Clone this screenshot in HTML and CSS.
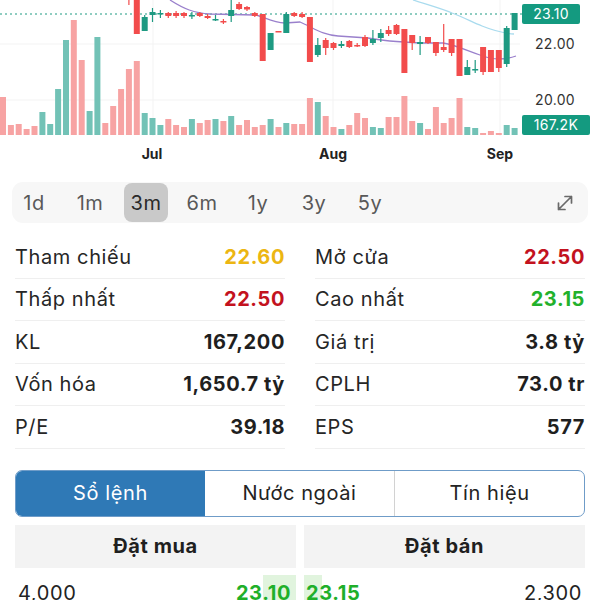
FILE: index.html
```html
<!DOCTYPE html>
<html lang="vi">
<head>
<meta charset="utf-8">
<title>Chart</title>
<link rel="stylesheet" href="styles.css">
</head>
<body>
<div class="chart">
<svg width="600" height="168" viewBox="0 0 600 168">
  <g class="grid">
    <line x1="153" y1="0" x2="153" y2="136"/>
    <line x1="333" y1="0" x2="333" y2="136"/>
    <line x1="500" y1="0" x2="500" y2="136"/>
    <line x1="0" y1="44" x2="520" y2="44"/>
    <line x1="0" y1="100" x2="520" y2="100"/>
  </g>
  <g class="vol-dn">
    <rect x="0" y="97" width="6" height="38"/>
    <rect x="7.9" y="125" width="6" height="10"/>
    <rect x="15.7" y="124" width="6" height="11"/>
    <rect x="23.6" y="129" width="6" height="6"/>
    <rect x="31.5" y="126" width="6" height="9"/>
    <rect x="70.8" y="20" width="6" height="115"/>
    <rect x="78.7" y="60" width="6" height="75"/>
    <rect x="102.3" y="123" width="6" height="12"/>
    <rect x="110.2" y="106" width="6" height="29"/>
    <rect x="118.1" y="89" width="6" height="46"/>
    <rect x="125.9" y="69" width="6" height="66"/>
    <rect x="133.8" y="61" width="6" height="74"/>
    <rect x="165.3" y="119" width="6" height="16"/>
    <rect x="173.1" y="125" width="6" height="10"/>
    <rect x="181.0" y="127" width="6" height="8"/>
    <rect x="196.8" y="123" width="6" height="12"/>
    <rect x="204.6" y="120" width="6" height="15"/>
    <rect x="220.4" y="121" width="6" height="14"/>
    <rect x="236.1" y="125" width="6" height="10"/>
    <rect x="244.0" y="120" width="6" height="15"/>
    <rect x="251.8" y="127" width="6" height="8"/>
    <rect x="259.7" y="125" width="6" height="10"/>
    <rect x="275.5" y="127" width="6" height="8"/>
    <rect x="291.2" y="124" width="6" height="11"/>
    <rect x="299.1" y="124" width="6" height="11"/>
    <rect x="306.9" y="98" width="6" height="37"/>
    <rect x="322.7" y="116" width="6" height="19"/>
    <rect x="330.5" y="127" width="6" height="8"/>
    <rect x="346.3" y="125" width="6" height="10"/>
    <rect x="354.2" y="113" width="6" height="22"/>
    <rect x="362.0" y="118" width="6" height="17"/>
    <rect x="385.6" y="117" width="6" height="18"/>
    <rect x="393.5" y="117" width="6" height="18"/>
    <rect x="401.4" y="96" width="6" height="39"/>
    <rect x="409.2" y="121" width="6" height="14"/>
    <rect x="425.0" y="129" width="6" height="6"/>
    <rect x="432.9" y="107" width="6" height="28"/>
    <rect x="440.7" y="123" width="6" height="12"/>
    <rect x="448.6" y="118" width="6" height="17"/>
    <rect x="456.5" y="98" width="6" height="37"/>
    <rect x="480.1" y="133" width="6" height="2"/>
    <rect x="487.9" y="131" width="6" height="4"/>
    <rect x="495.8" y="133" width="6" height="2"/>
  </g>
  <g class="vol-up">
    <rect x="39.4" y="112" width="6" height="23"/>
    <rect x="47.2" y="124" width="6" height="11"/>
    <rect x="55.1" y="89" width="6" height="46"/>
    <rect x="63.0" y="40" width="6" height="95"/>
    <rect x="86.6" y="111" width="6" height="24"/>
    <rect x="94.4" y="37" width="6" height="98"/>
    <rect x="141.7" y="113" width="6" height="22"/>
    <rect x="149.5" y="118" width="6" height="17"/>
    <rect x="157.4" y="125" width="6" height="10"/>
    <rect x="188.9" y="119" width="6" height="16"/>
    <rect x="212.5" y="119" width="6" height="16"/>
    <rect x="228.2" y="116" width="6" height="19"/>
    <rect x="267.6" y="119" width="6" height="16"/>
    <rect x="283.3" y="123" width="6" height="12"/>
    <rect x="314.8" y="102" width="6" height="33"/>
    <rect x="338.4" y="129" width="6" height="6"/>
    <rect x="369.9" y="127" width="6" height="8"/>
    <rect x="377.8" y="128" width="6" height="7"/>
    <rect x="417.1" y="123" width="6" height="12"/>
    <rect x="464.3" y="127" width="6" height="8"/>
    <rect x="472.2" y="128" width="6" height="7"/>
    <rect x="503.7" y="125" width="6" height="10"/>
    <rect x="511.6" y="128" width="6" height="7"/>
  </g>
  <line class="last" x1="0" y1="14" x2="522" y2="14"/>
  <path class="ma-long" d="M413,0 C425,4 440,8 452,13 C465,18 472,22 482,26 C492,30 500,33 514,34"/>
  <path class="ma-short" d="M170,0 C184,9 194,13 210,14 L255,15 C263,16 271,22 285,23 L300,22 C314,28 322,35 338,36 L368,38 C384,41 400,42 420,43 L443,43 C455,45 466,50 480,55 C490,59 502,61 516,56"/>
  <g class="dn">
    <line x1="128.9" y1="0" x2="128.9" y2="5"/>
    <rect x="133.8" y="0" width="6" height="34"/>
    <line x1="168.3" y1="12" x2="168.3" y2="18"/><rect x="165.3" y="13" width="6" height="3"/>
    <line x1="176.1" y1="11" x2="176.1" y2="18"/><rect x="173.1" y="13" width="6" height="3"/>
    <line x1="184.0" y1="12" x2="184.0" y2="18"/><rect x="181.0" y="13" width="6" height="3"/>
    <line x1="199.8" y1="12" x2="199.8" y2="17"/><rect x="196.8" y="13" width="6" height="3"/>
    <line x1="207.6" y1="14" x2="207.6" y2="19"/><rect x="204.6" y="16" width="6" height="2"/>
    <line x1="223.4" y1="19" x2="223.4" y2="24"/><rect x="220.4" y="21" width="6" height="1.5"/>
    <line x1="239.1" y1="2" x2="239.1" y2="10"/><rect x="236.1" y="4" width="6" height="5"/>
    <line x1="247.0" y1="6" x2="247.0" y2="11"/><rect x="244.0" y="7" width="6" height="2.5"/>
    <line x1="254.8" y1="12" x2="254.8" y2="17"/><rect x="251.8" y="13" width="6" height="3"/>
    <rect x="259.7" y="14" width="6" height="47"/>
    <rect x="275.5" y="31" width="6" height="1.5"/>
    <line x1="294.2" y1="12" x2="294.2" y2="17"/><rect x="291.2" y="13" width="6" height="3"/>
    <line x1="302.1" y1="12" x2="302.1" y2="18"/><rect x="299.1" y="14" width="6" height="3"/>
    <rect x="306.9" y="17" width="6" height="45"/>
    <line x1="325.7" y1="38" x2="325.7" y2="55"/><rect x="322.7" y="40" width="6" height="8"/>
    <line x1="333.5" y1="42" x2="333.5" y2="50"/><rect x="330.5" y="43" width="6" height="5"/>
    <line x1="349.3" y1="40" x2="349.3" y2="48"/><rect x="346.3" y="41" width="6" height="6"/>
    <line x1="357.2" y1="43" x2="357.2" y2="47"/><rect x="354.2" y="45" width="6" height="1.5"/>
    <line x1="365.0" y1="35" x2="365.0" y2="47"/><rect x="362.0" y="37" width="6" height="9"/>
    <line x1="388.6" y1="26" x2="388.6" y2="36"/><rect x="385.6" y="30" width="6" height="4"/>
    <line x1="396.5" y1="24" x2="396.5" y2="35"/><rect x="393.5" y="25" width="6" height="9"/>
    <rect x="401.4" y="29" width="6" height="44"/>
    <line x1="412.2" y1="35" x2="412.2" y2="50"/><rect x="409.2" y="35" width="6" height="8"/>
    <line x1="428.0" y1="37" x2="428.0" y2="44"/><rect x="425.0" y="37" width="6" height="6"/>
    <line x1="435.9" y1="42" x2="435.9" y2="56"/><rect x="432.9" y="42" width="6" height="11"/>
    <line x1="443.7" y1="24" x2="443.7" y2="52"/><rect x="440.7" y="47" width="6" height="3"/>
    <line x1="451.6" y1="39" x2="451.6" y2="56"/><rect x="448.6" y="39" width="6" height="14"/>
    <rect x="456.5" y="39" width="6" height="37"/>
    <line x1="483.1" y1="47" x2="483.1" y2="75"/><rect x="480.1" y="47" width="6" height="25"/>
    <rect x="487.9" y="50" width="6" height="22"/>
    <line x1="498.8" y1="50" x2="498.8" y2="72"/><rect x="495.8" y="50" width="6" height="18"/>
  </g>
  <g class="up">
    <line x1="144.7" y1="15" x2="144.7" y2="31"/><rect x="141.7" y="17" width="6" height="14"/>
    <line x1="152.5" y1="8" x2="152.5" y2="22"/><rect x="149.5" y="12" width="6" height="3"/>
    <line x1="160.4" y1="10" x2="160.4" y2="18"/><rect x="157.4" y="13" width="6" height="1.5"/>
    <line x1="191.9" y1="12" x2="191.9" y2="19"/><rect x="188.9" y="15" width="6" height="1.5"/>
    <line x1="215.5" y1="15" x2="215.5" y2="21"/><rect x="212.5" y="19" width="6" height="1.5"/>
    <line x1="231.2" y1="0" x2="231.2" y2="22"/><rect x="228.2" y="10" width="6" height="6"/>
    <rect x="267.6" y="33" width="6" height="17"/>
    <line x1="286.3" y1="12" x2="286.3" y2="33"/><rect x="283.3" y="14" width="6" height="19"/>
    <line x1="317.8" y1="38" x2="317.8" y2="57"/><rect x="314.8" y="45" width="6" height="10"/>
    <line x1="341.4" y1="41" x2="341.4" y2="48"/><rect x="338.4" y="44" width="6" height="2"/>
    <line x1="372.9" y1="30" x2="372.9" y2="45"/><rect x="369.9" y="39" width="6" height="4"/>
    <line x1="380.8" y1="29" x2="380.8" y2="42"/><rect x="377.8" y="33" width="6" height="5"/>
    <line x1="420.1" y1="36" x2="420.1" y2="55"/><rect x="417.1" y="42" width="6" height="2"/>
    <line x1="467.3" y1="60" x2="467.3" y2="75"/><rect x="464.3" y="67" width="6" height="8"/>
    <line x1="475.2" y1="60" x2="475.2" y2="73"/><rect x="472.2" y="69" width="6" height="1.5"/>
    <line x1="506.7" y1="26" x2="506.7" y2="67"/><rect x="503.7" y="28" width="6" height="36"/>
    <rect x="511.6" y="13" width="6" height="17"/>
  </g>
  <rect class="tag" x="522" y="4" width="58" height="20" rx="2"/>
  <text class="tag-text" x="551" y="19" text-anchor="middle">23.10</text>
  <text class="axis-y" x="555" y="49" text-anchor="middle">22.00</text>
  <text class="axis-y" x="555" y="105" text-anchor="middle">20.00</text>
  <rect class="tag" x="522" y="115" width="68" height="20" rx="2"/>
  <text class="tag-text" x="556" y="130" text-anchor="middle">167.2K</text>
  <text class="axis-x" x="152" y="159" text-anchor="middle">Jul</text>
  <text class="axis-x" x="333" y="159" text-anchor="middle">Aug</text>
  <text class="axis-x" x="500" y="159" text-anchor="middle">Sep</text>
</svg>
</div>

<div class="ranges">
  <span class="range">1d</span>
  <span class="range">1m</span>
  <span class="range active">3m</span>
  <span class="range">6m</span>
  <span class="range">1y</span>
  <span class="range">3y</span>
  <span class="range">5y</span>
  <span class="expand">
    <svg width="22" height="22" viewBox="0 0 22 22"><path d="M4.5 17.5 L17.5 4.5 M11 4.5 H17.5 V11 M4.5 11 V17.5 H11"/></svg>
  </span>
</div>

<div class="stats">
  <div class="col">
    <div class="row"><span class="lbl">Tham chiếu</span><span class="val ref">22.60</span></div>
    <div class="row"><span class="lbl">Thấp nhất</span><span class="val down">22.50</span></div>
    <div class="row"><span class="lbl">KL</span><span class="val">167,200</span></div>
    <div class="row"><span class="lbl">Vốn hóa</span><span class="val">1,650.7 tỷ</span></div>
    <div class="row"><span class="lbl">P/E</span><span class="val">39.18</span></div>
  </div>
  <div class="col">
    <div class="row"><span class="lbl">Mở cửa</span><span class="val down">22.50</span></div>
    <div class="row"><span class="lbl">Cao nhất</span><span class="val up">23.15</span></div>
    <div class="row"><span class="lbl">Giá trị</span><span class="val">3.8 tỷ</span></div>
    <div class="row"><span class="lbl">CPLH</span><span class="val">73.0 tr</span></div>
    <div class="row"><span class="lbl">EPS</span><span class="val">577</span></div>
  </div>
</div>

<div class="tabs">
  <div class="tab active">Sổ lệnh</div>
  <div class="tab">Nước ngoài</div>
  <div class="tab">Tín hiệu</div>
</div>

<div class="book">
  <div class="book-head">Đặt mua</div>
  <div class="book-head">Đặt bán</div>
  <div class="book-cell bid" style="--depth:33px"><span class="qty">4,000</span><span class="price">23.10</span></div>
  <div class="book-cell ask" style="--depth:18px"><span class="price">23.15</span><span class="qty">2,300</span></div>
</div>
</body>
</html>
```

FILE: styles.css
```css
* { box-sizing: border-box; }
html, body { margin: 0; padding: 0; background: #fff; }
body {
  font-family: "Inter", "Noto Sans", "Liberation Sans", sans-serif;
  color: #232323;
  width: 600px;
  overflow: hidden;
}

.chart svg { display: block; }
.grid line { stroke: #f3f3f3; stroke-width: 1; }
.vol-dn rect { fill: #f7a3a3; }
.vol-up rect { fill: #72c2b6; }
.dn rect { fill: #f24c4c; }
.dn line { stroke: #f24c4c; stroke-width: 1.2; }
.up rect { fill: #1e9a82; }
.up line { stroke: #1e9a82; stroke-width: 1.2; }
.last { stroke: #1e9a82; stroke-width: 1; stroke-dasharray: 2 3; }
.ma-short { fill: none; stroke: #9a80cc; stroke-width: 1.3; }
.ma-long { fill: none; stroke: #a9dbee; stroke-width: 1.3; }
.tag { fill: #149a80; }
.tag-text { fill: #fff; font-size: 14px; font-family: "Inter", sans-serif; letter-spacing: 0.3px; }
.axis-y { fill: #333; font-size: 14px; font-family: "Inter", sans-serif; letter-spacing: 0.3px; }
.axis-x { fill: #222; font-size: 14px; font-weight: 700; font-family: "Inter", sans-serif; }

.ranges {
  display: flex;
  align-items: center;
  gap: 12px;
  margin: 14px 12px 0 12px;
  height: 41px;
  background: #f7f7f7;
  border-radius: 11px;
}
.range {
  width: 44px;
  height: 39px;
  display: flex;
  align-items: center;
  justify-content: center;
  font-size: 20px;
  letter-spacing: 0.5px;
  color: #595959;
  border-radius: 8px;
}
.range.active { background: #c9c9c9; color: #2a2a2a; }
.expand {
  margin-left: auto;
  margin-right: 12px;
  width: 22px;
  height: 22px;
}
.expand svg { display: block; }
.expand path { fill: none; stroke: #6a6a6a; stroke-width: 1.7; stroke-linecap: round; stroke-linejoin: round; }

.stats {
  display: grid;
  grid-template-columns: 1fr 1fr;
  column-gap: 30px;
  padding: 0 15px;
  margin-top: 13px;
}
.row {
  display: flex;
  justify-content: space-between;
  align-items: center;
  height: 42.5px;
  border-bottom: 1px solid #efefef;
  font-size: 20px;
  letter-spacing: 0.6px;
}
.lbl { color: #262626; }
.val { font-weight: 700; color: #1f1f1f; }
.val.ref { color: #ecb612; }
.val.down { color: #c3121e; }
.val.up { color: #22b12c; }

.tabs {
  display: flex;
  margin: 21px 15px 0 15px;
  height: 47px;
  border: 1px solid #6f9cc8;
  border-radius: 7px;
  overflow: hidden;
}
.tab {
  flex: 1;
  display: flex;
  align-items: center;
  justify-content: center;
  font-size: 20px;
  letter-spacing: 0.6px;
  color: #232323;
  border-left: 1px solid #d2d2d2;
}
.tab:first-child { border-left: none; }
.tab.active { background: #2f79b6; color: #fff; }
.tab.active + .tab { border-left: none; }

.book {
  display: grid;
  grid-template-columns: 1fr 1fr;
  column-gap: 8px;
  padding: 0 15px;
  margin-top: 8px;
}
.book-head {
  height: 43px;
  background: #f3f3f3;
  display: flex;
  align-items: center;
  justify-content: center;
  font-size: 20px;
  font-weight: 700;
  letter-spacing: 0.6px;
  color: #1f1f1f;
}
.book-cell {
  margin-top: 7px;
  height: 36px;
  display: flex;
  justify-content: space-between;
  align-items: center;
  font-size: 20px;
  letter-spacing: 0.6px;
}
.book-cell.bid {
  padding: 0 5px 0 3px;
  background: linear-gradient(to left, #e1f4de var(--depth), transparent var(--depth));
}
.book-cell.ask {
  padding: 0 3px 0 2px;
  background: linear-gradient(to right, #e1f4de var(--depth), transparent var(--depth));
}
.qty { color: #232323; }
.price { font-weight: 700; color: #1faf2a; }
```
